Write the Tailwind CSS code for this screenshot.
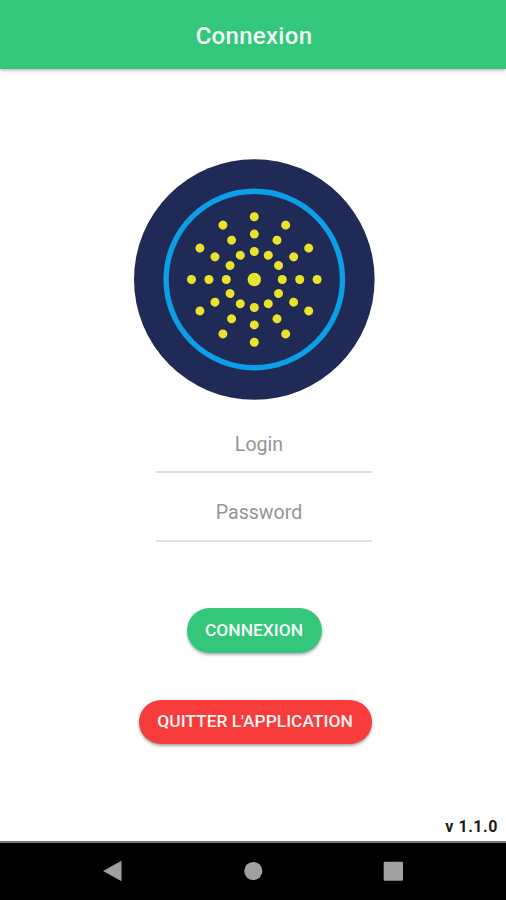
<!DOCTYPE html>
<html lang="fr">
<head>
<meta charset="utf-8">
<title>Connexion</title>
<script src="https://cdn.jsdelivr.net/npm/@tailwindcss/browser@4"></script>
</head>
<body class="bg-white overflow-hidden">
<div class="w-[506px] h-[900px] flex flex-col font-[Roboto,sans-serif]">
  <header class="h-[69px] shrink-0 bg-[#34c67a] flex items-center justify-center pt-[3px] pl-[2px] shadow-[0_1px_4px_rgba(0,0,0,0.35)]">
    <h1 class="text-[24px] leading-[28px] font-medium tracking-[0.3px] text-[#f2fff7]">Connexion</h1>
  </header>
  <main class="flex-1 flex flex-col items-center">
    <svg class="mt-[90px] ml-[2px] w-[242px] h-[242px] shrink-0" viewBox="-121 -121 242 242">
      <defs>
        <g id="ray" fill="#e9e32b">
          <circle cy="-28" r="4.5"/><circle cy="-45.4" r="4.5"/><circle cy="-62.8" r="4.5"/>
        </g>
      </defs>
      <g transform="translate(.3 -.5)">
        <circle r="120.3" fill="#202a56"/>
        <circle r="88.2" fill="none" stroke="#0c9fe5" stroke-width="5.4"/>
        <circle r="6.7" fill="#e9e32b"/>
        <use href="#ray"/>
        <use href="#ray" transform="rotate(30)"/>
        <use href="#ray" transform="rotate(60)"/>
        <use href="#ray" transform="rotate(90)"/>
        <use href="#ray" transform="rotate(120)"/>
        <use href="#ray" transform="rotate(150)"/>
        <use href="#ray" transform="rotate(180)"/>
        <use href="#ray" transform="rotate(210)"/>
        <use href="#ray" transform="rotate(240)"/>
        <use href="#ray" transform="rotate(270)"/>
        <use href="#ray" transform="rotate(300)"/>
        <use href="#ray" transform="rotate(330)"/>
      </g>
    </svg>
    <form class="flex flex-col items-center w-full">
      <div class="w-[216px] ml-[22px] h-[72px] border-b-2 border-[#e0e0e0] flex items-center justify-center pr-[10px] pt-[17px]">
        <span class="text-[19.6px] leading-[24px] text-[#959595]">Login</span>
      </div>
      <div class="w-[216px] ml-[22px] h-[69px] border-b-2 border-[#e0e0e0] flex items-center justify-center pr-[10px] pt-[12px]">
        <span class="text-[19.6px] leading-[24px] text-[#959595]">Password</span>
      </div>
      <button type="button" class="mt-[66px] ml-[2px] w-[135px] h-[45px] pb-[1px] rounded-full bg-[#34c67a] text-[#f2fff7] text-[17.4px] font-medium shadow-[0_2px_3px_rgba(0,0,0,0.3)]">CONNEXION</button>
      <button type="button" class="mt-[47px] ml-[4px] w-[233px] h-[44px] pb-[2px] rounded-full bg-[#f83c3c] text-[#fff2f2] text-[17.4px] font-medium shadow-[0_2px_3px_rgba(0,0,0,0.35)]">QUITTER L'APPLICATION</button>
    </form>
    <p class="mt-auto self-end mr-[8px] mb-[4px] text-[16px] leading-[20px] font-bold tracking-[0.55px] text-[#1c1c1c]">v 1.1.0</p>
  </main>
  <nav class="h-[59px] shrink-0 bg-black border-t-2 border-[#777] flex items-center pl-[102px] pb-[2px]">
    <svg class="w-[302px] h-[22px]" viewBox="0 0 302 22" fill="#a0a0a0">
      <path d="M1 11 19.5 .8V21.2Z"/>
      <circle cx="151.3" cy="11" r="9.1"/>
      <rect x="281.7" y="1.7" width="19.3" height="19" rx="1"/>
    </svg>
  </nav>
</div>
</body>
</html>
